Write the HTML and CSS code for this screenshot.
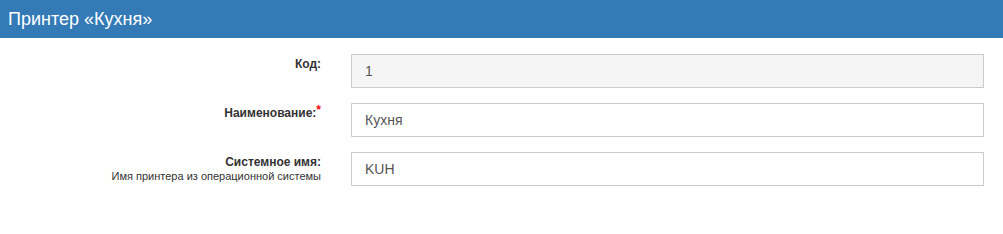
FILE: index.html
```html
<!DOCTYPE html>
<html lang="ru">
<head>
  <meta charset="UTF-8">
  <meta name="viewport" content="width=device-width, initial-scale=1.0">
  <title>Принтер «Кухня»</title>
  <link rel="stylesheet" href="styles.css">
</head>
<body>

<div class="title">
  <h1>Принтер «Кухня»</h1>
</div>

<form class="form">
  <div class="row">
    <label class="label" for="kod">Код:</label>
    <input class="input" id="kod" type="text" value="1" readonly>
  </div>
  <div class="row">
    <label class="label" for="name">Наименование:<span class="req">*</span></label>
    <input class="input" id="name" type="text" value="Кухня">
  </div>
  <div class="row">
    <label class="label" for="sys">Системное имя:
      <span class="hint">Имя принтера из операционной системы</span>
    </label>
    <input class="input" id="sys" type="text" value="KUH">
  </div>
</form>

</body>
</html>
```

FILE: styles.css
```css
body {
  font-family: "Liberation Sans", Arial, sans-serif;
  margin: 0;
  padding: 0;
  background-color: #fff;
  color: #333;
}
.title {
  background-color: #337ab7;
  color: #fff;
  height: 38px;
  padding: 0 8px;
  display: flex;
  align-items: center;
}
.title h1 {
  margin: 0;
  font-size: 18px;
  font-weight: normal;
}
.form {
  padding-top: 16px;
  display: flex;
  flex-direction: column;
  gap: 15px;
}
.row {
  display: grid;
  grid-template-columns: 321px 633px;
  column-gap: 30px;
}
.label {
  text-align: right;
  font-size: 12px;
  font-weight: bold;
  padding-top: 3px;
  line-height: 14px;
}
.req {
  color: #e00;
  vertical-align: top;
  position: relative;
  top: -3px;
}
.hint {
  display: block;
  font-size: 11px;
  font-weight: normal;
  line-height: 14px;
}
.input {
  box-sizing: border-box;
  height: 34px;
  margin: 0;
  padding: 6px 13px;
  font-family: inherit;
  font-size: 14px;
  color: #555;
  border: 1px solid #ccc;
  border-radius: 0;
  background-color: #fff;
  outline: none;
}
.input[readonly] {
  background-color: #f5f5f5;
}
```
